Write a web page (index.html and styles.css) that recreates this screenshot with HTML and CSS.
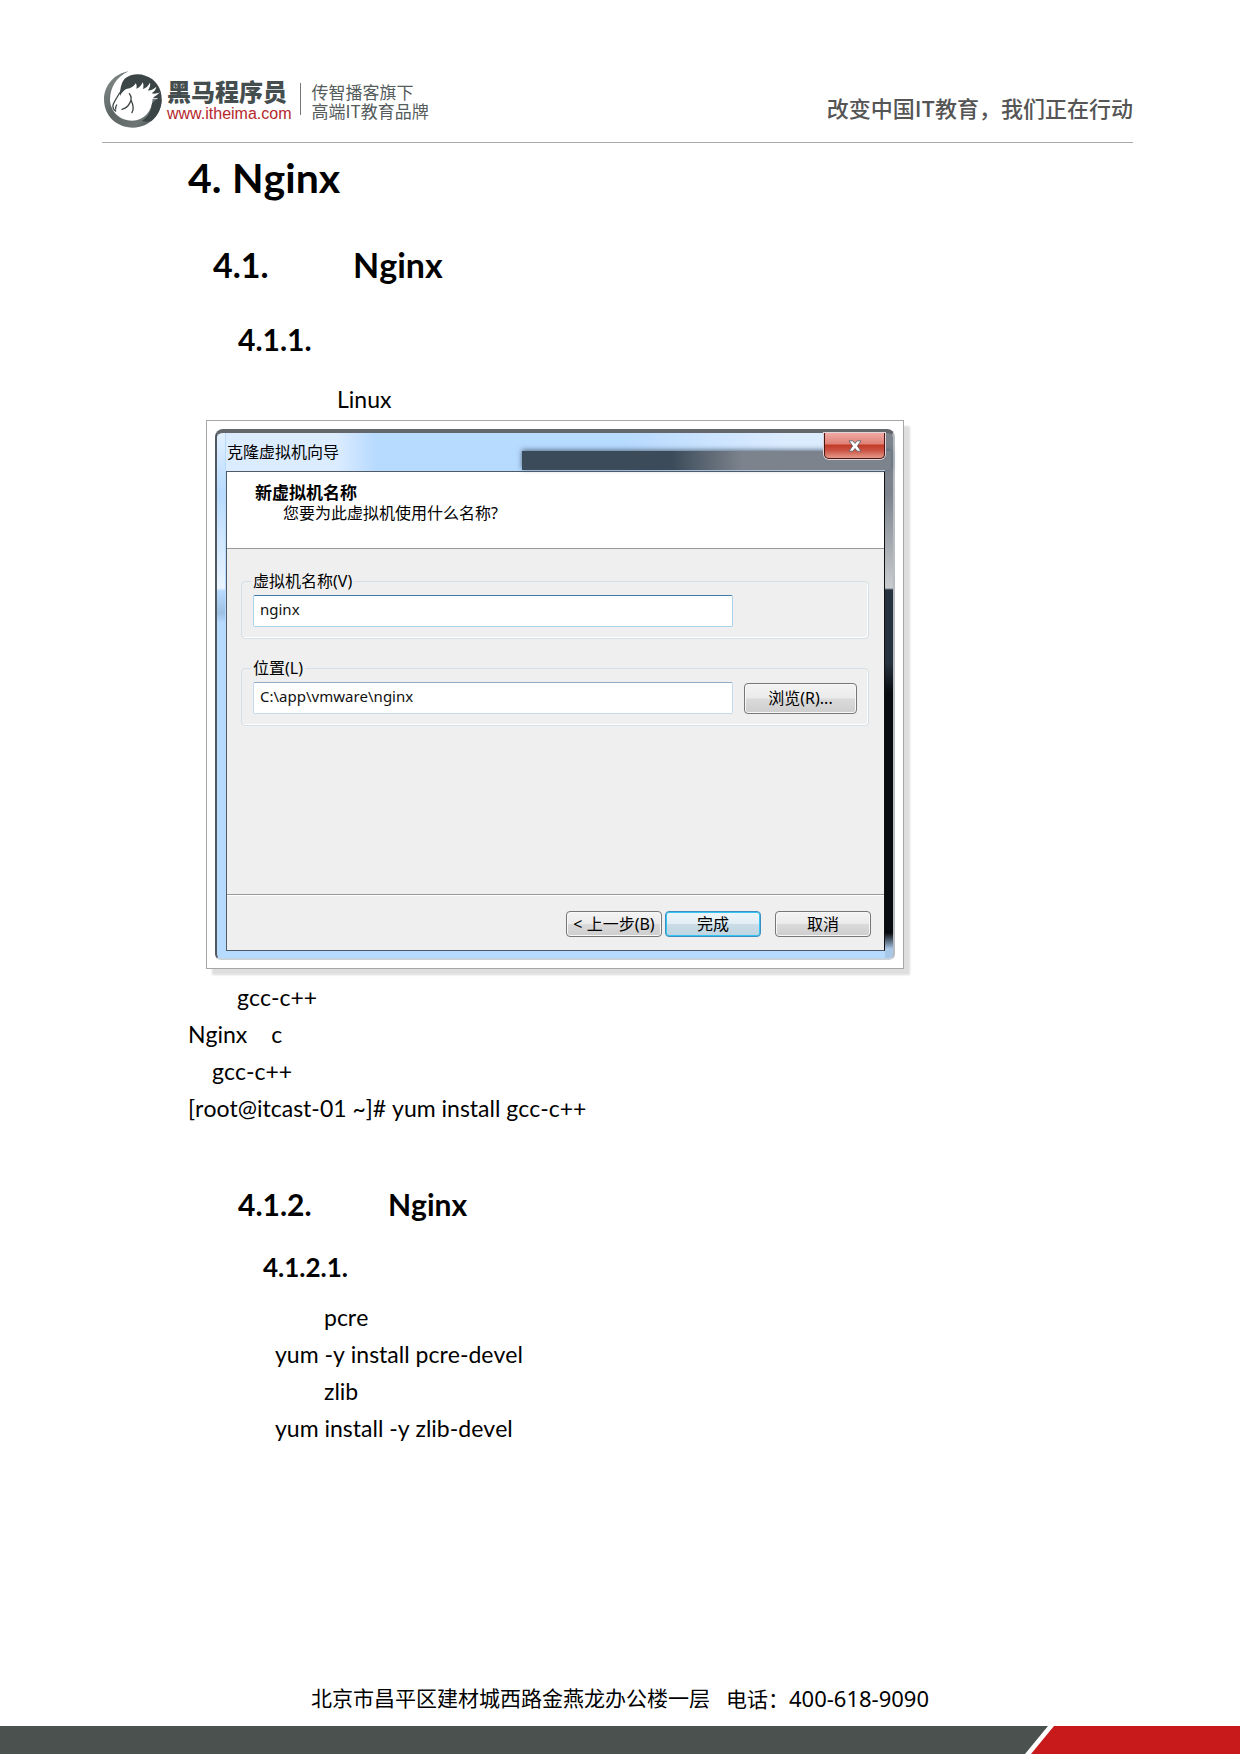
FILE: index.html
```html
<!DOCTYPE html>
<html lang="zh-CN">
<head>
<meta charset="utf-8">
<meta name="viewport" content="width=device-width, initial-scale=1">
<title>Nginx</title>
<link rel="stylesheet" href="styles.css">
</head>
<body>
<header class="page-header">
  <div class="brand">
    <svg class="brand-mark" viewBox="12 14 178 174" aria-hidden="true">
      <defs>
        <linearGradient id="ring" x1="0" y1="0" x2="1" y2="1">
          <stop offset="0" stop-color="#8b9191"/>
          <stop offset="0.45" stop-color="#5c6464"/>
          <stop offset="0.75" stop-color="#6d7575"/>
          <stop offset="1" stop-color="#3c4444"/>
        </linearGradient>
      </defs>
      <path fill="url(#ring)" d="M88 18C48 24 14 58 14 102C14 152 52 187 101 187C148 187 187 150 187 102L160 100C158 138 134 165 98 166C64 166 34 142 32 104C32 66 52 34 88 18Z"/>
      <path fill="#3c4545" d="M76 40C94 26 118 24 138 31C170 41 188 70 187 103C187 128 174 152 157 166C146 170 136 170 128 166C146 156 156 138 158 114L176 99L161 98C167 92 176 88 182 81C171 86 162 86 157 84C164 79 170 72 171 64C163 72 153 76 146 75C151 68 154 59 152 52C147 62 138 69 131 71C133 63 133 57 130 51C126 62 117 69 111 70C113 63 112 58 109 54C104 65 91 69 79 72C73 77 66 83 62 92C62 72 65 53 76 40Z"/>
      <path class="stroke" d="M67 74C59 86 49 101 42 116C38 126 43 135 49 137"/>
      <path class="stroke" d="M52 119Q48 125 49 131M90 85C97 94 98 101 92 112C86 124 77 130 68 132M96 106C102 119 105 130 98 142"/>
    </svg>
    <div class="brand-name">
      <strong>黑马程序员</strong>
      <a href="#">www.itheima.com</a>
    </div>
    <p class="brand-tag">传智播客旗下<br>高端IT教育品牌</p>
  </div>
  <p class="slogan">改变中国IT教育，我们正在行动</p>
</header>

<main class="content">
  <h1><span class="num">4.</span>Nginx</h1>
  <h2><span class="num">4.1.</span>Nginx</h2>
  <h3><span class="num">4.1.1.</span></h3>
  <p class="lead indent-6">Linux</p>

  <figure class="shot">
    <section class="window" aria-labelledby="window-title">
      <div class="titlebar">
        <span class="window-title" id="window-title">克隆虚拟机向导</span>
        <button class="close" type="button" aria-label="关闭">
          <svg viewBox="0 0 16 14" aria-hidden="true"><path d="M1 1h4.500L8 4l2.500-3H15l-4.200 6 4.200 6h-4.500L8 10l-2.500 3H1l4.200-6z"/></svg>
        </button>
      </div>
      <form class="client">
        <div class="wizard-head">
          <strong>新虚拟机名称</strong>
          <span>您要为此虚拟机使用什么名称?</span>
        </div>
        <div class="wizard-body">
          <fieldset>
            <legend><label for="vm-name">虚拟机名称(V)</label></legend>
            <div class="row"><input class="focused" id="vm-name" type="text" value="nginx"></div>
          </fieldset>
          <fieldset>
            <legend><label for="vm-path">位置(L)</label></legend>
            <div class="row">
              <input id="vm-path" type="text" value="C:\app\vmware\nginx">
              <button class="btn browse" type="button">浏览(R)...</button>
            </div>
          </fieldset>
        </div>
        <div class="wizard-foot">
          <button class="btn" type="button">&lt; 上一步(B)</button>
          <button class="btn primary" type="button">完成</button>
          <button class="btn cancel" type="button">取消</button>
        </div>
      </form>
    </section>
  </figure>

  <div class="copy">
    <p class="indent-2">gcc-c++</p>
    <p>Nginx<span class="gap">c</span></p>
    <p class="indent-1">gcc-c++</p>
    <p>[root@itcast-01 ~]# yum install gcc-c++</p>
  </div>

  <h3 class="next"><span class="num">4.1.2.</span>Nginx</h3>
  <h4>4.1.2.1.</h4>
  <div class="steps">
    <p class="indent-2">pcre</p>
    <p>yum -y install pcre-devel</p>
    <p class="indent-2">zlib</p>
    <p>yum install -y zlib-devel</p>
  </div>
</main>

<footer class="page-footer">
  <p><span>北京市昌平区建材城西路金燕龙办公楼一层</span><span>电话：<span class="phone">400-618-9090</span></span></p>
  <div class="stripe"><i class="stripe-dark"></i><i class="stripe-red"></i></div>
</footer>
</body>
</html>
```

FILE: styles.css
```css
* { box-sizing: border-box; }

body {
  margin: 0;
  min-height: 100vh;
  display: flex;
  flex-direction: column;
  background: #fff;
  color: #000;
  font-family: Lato, "Noto Sans CJK SC", sans-serif;
  font-size: 23px;
  line-height: 37px;
  font-kerning: none;
}

h1, h2, h3, h4, p, figure { margin: 0; }

/* Letterhead */
.page-header {
  display: flex;
  justify-content: space-between;
  margin: 0 107px 0 102px;
  padding: 70px 0 14px;
  border-bottom: 1px solid #a9a9a9;
  font-family: "Noto Sans CJK SC", sans-serif;
}
.brand { display: flex; align-items: center; height: 58px; }
.brand-mark { width: 60px; height: 58px; margin-left: 1px; }
.brand-mark .stroke { fill: none; stroke: #3c4545; stroke-width: 4; stroke-linecap: round; }
.brand-name { display: flex; flex-direction: column; margin-left: 4px; padding-top: 4px; }
.brand-name strong { font-size: 24px; line-height: 26px; font-weight: 900; color: #454e4e; }
.brand-name a {
  font: 16px/20px "Liberation Sans", Arial, sans-serif;
  color: #b5272b;
  text-decoration: none;
}
.brand-tag {
  margin-left: 9px;
  padding: 3px 0 0 11px;
  background: linear-gradient(#777, #777) left center / 1px 32px no-repeat;
  font-size: 17px;
  line-height: 19px;
  color: #555c5c;
}
.slogan { padding-top: 21px; font-size: 22px; line-height: 32px; font-weight: 500; color: #555; }

/* Document body */
.content { flex: 1; padding: 11px 108px 40px 188px; }
.num { display: inline-block; }
h1 { font-size: 41px; line-height: 48px; }
h1 .num { min-width: 44px; }
h2 { margin-top: 44px; padding-left: 25px; font-size: 34px; line-height: 38px; }
h2 .num { min-width: 140px; }
h3 { margin-top: 37px; padding-left: 50px; font-size: 30px; line-height: 36px; }
h3 .num { min-width: 150px; }
h3.next { margin-top: 59px; }
h4 { margin-top: 29px; padding-left: 75px; font-size: 26px; line-height: 32px; }
.lead { margin-top: 24px; }
.indent-1 { padding-left: 24px; }
.indent-2 { padding-left: 49px; }
.indent-6 { padding-left: 149px; }
.gap { margin-left: 24px; }
.copy { margin-top: 10px; }
.steps { margin-top: 16px; padding-left: 87px; }

/* Framed dialog */
.shot {
  width: 698px;
  max-width: 100%;
  margin: 2px 0 0 18px;
  padding: 8px;
  border: 1px solid #a6a6a6;
  background: #fff;
  box-shadow: 6px 6px 2px #dedede;
  font-family: "Noto Sans", "Noto Sans CJK SC", sans-serif;
  font-size: 16px;
  line-height: 20px;
}
.window {
  position: relative;
  padding: 0 8px 7px 9px;
  border: 2px solid #515860;
  border-top: 4px solid #63676b;
  border-right-color: #b9bcc0;
  border-bottom-color: #c9d3dc;
  border-radius: 8px 8px 6px 6px;
  background:
    linear-gradient(#7c838c 0, #7c838c 60px, #c9cccf 155px, #26323d 157px, #26323d 230px, #080b0f 260px, #080b0f 500px, #a9c8e8 516px) right top / 8px 100% no-repeat,
    linear-gradient(#e4f1ff 0, #b7daff 60px, #eaf4ff 155px, #b7daff 158px, #9cc0e2 180px, #b7daff 190px) left top / 8px 100% no-repeat,
    #b7daff;
}
.titlebar {
  position: relative;
  display: flex;
  justify-content: space-between;
  height: 38px;
  background: linear-gradient(90deg, #dcecff 0, #dcecff 110px, #b7daff 150px, #b7daff 400px, #dcecff 560px);
}
.titlebar::before {
  content: "";
  position: absolute;
  left: 296px;
  right: -6px;
  top: 18px;
  bottom: 1px;
  background: linear-gradient(90deg, #3c4b5a 0, #3c4b5a 150px, #7c838c 220px);
  box-shadow: 0 -1px 5px #52677b;
}
.window-title { position: relative; padding: 9px 0 0 1px; }
.close {
  position: relative;
  display: grid;
  place-items: center;
  width: 61px;
  height: 26px;
  padding: 0;
  border: 1px solid #4b1714;
  border-top: 0;
  border-radius: 0 0 5px 5px;
  background: linear-gradient(#f0aaa3 0, #df8177 11px, #c23a25 12px, #cb5040 17px, #e59a8a);
  box-shadow: 0 0 0 1px #e3d3d8;
}
.close svg { width: 14px; height: 12px; overflow: visible; fill: #fff; stroke: #555b68; stroke-width: 1; }
.client {
  border: 1px solid #4f5a66;
  border-right-color: #111;
  background: #efefef;
}
.wizard-head {
  display: flex;
  flex-direction: column;
  height: 77px;
  padding: 11px 28px 0;
  border-bottom: 1px solid #999;
  background: #fff;
}
.wizard-head strong { font-size: 17px; line-height: 20px; }
.wizard-head span { padding-left: 28px; line-height: 20px; }
.wizard-body { min-height: 345px; padding: 22px 15px 0 14px; }
fieldset {
  min-width: 0;
  margin: 0 0 19px;
  padding: 4px 11px 11px;
  border: 1px solid #d5dfe5;
  border-radius: 4px;
  box-shadow: inset -1px -1px 0 #fff;
}
legend { margin-left: -2px; padding: 0 2px; }
.row { display: flex; align-items: center; gap: 11px; }
input {
  flex: 0 1 480px;
  min-width: 0;
  height: 32px;
  padding: 0 6px 4px;
  border: 1px solid #c5daed;
  border-top-color: #8fadc8;
  border-radius: 2px;
  background: #fff;
  color: #111;
  font: inherit;
  font-size: 15px;
}
input.focused { border-color: #a9d3ec; border-top-color: #3d7bad; }
.btn {
  width: 96px;
  height: 26px;
  padding: 0;
  border: 1px solid #777;
  border-radius: 4px;
  background: linear-gradient(#f3f3f3 0, #ebebeb 48%, #dadada 52%, #cecece);
  box-shadow: inset 0 0 0 1px #f8f8f8;
  color: #000;
  font: inherit;
  line-height: 20px;
  white-space: nowrap;
}
.browse { width: 113px; height: 31px; }
.primary {
  border-color: #3c8fc0;
  background: linear-gradient(#eef5f9 0, #e2eef4 48%, #c9dce7 52%, #bfd5e1);
  box-shadow: inset 0 0 0 1px #35c5f2;
}
.wizard-foot {
  display: flex;
  justify-content: flex-end;
  gap: 3px;
  height: 56px;
  padding: 16px 13px 0;
  border-top: 1px solid #999;
  box-shadow: inset 0 1px 0 #fff;
}
.cancel { margin-left: 11px; }

/* Footer */
.page-footer { font-family: "Noto Sans", "Noto Sans CJK SC", sans-serif; }
.page-footer p {
  display: flex;
  justify-content: center;
  gap: 16px;
  padding-bottom: 11px;
  font-size: 21px;
  line-height: 32px;
}
.phone { font-size: 22px; }
.stripe { display: flex; height: 28px; }
.stripe-dark { flex: 1; margin-right: -17px; background: #4a514f; clip-path: polygon(0 0, 100% 0, calc(100% - 23px) 100%, 0 100%); }
.stripe-red { width: 209px; background: #c81a1b; clip-path: polygon(23px 0, 100% 0, 100% 100%, 0 100%); }
```
